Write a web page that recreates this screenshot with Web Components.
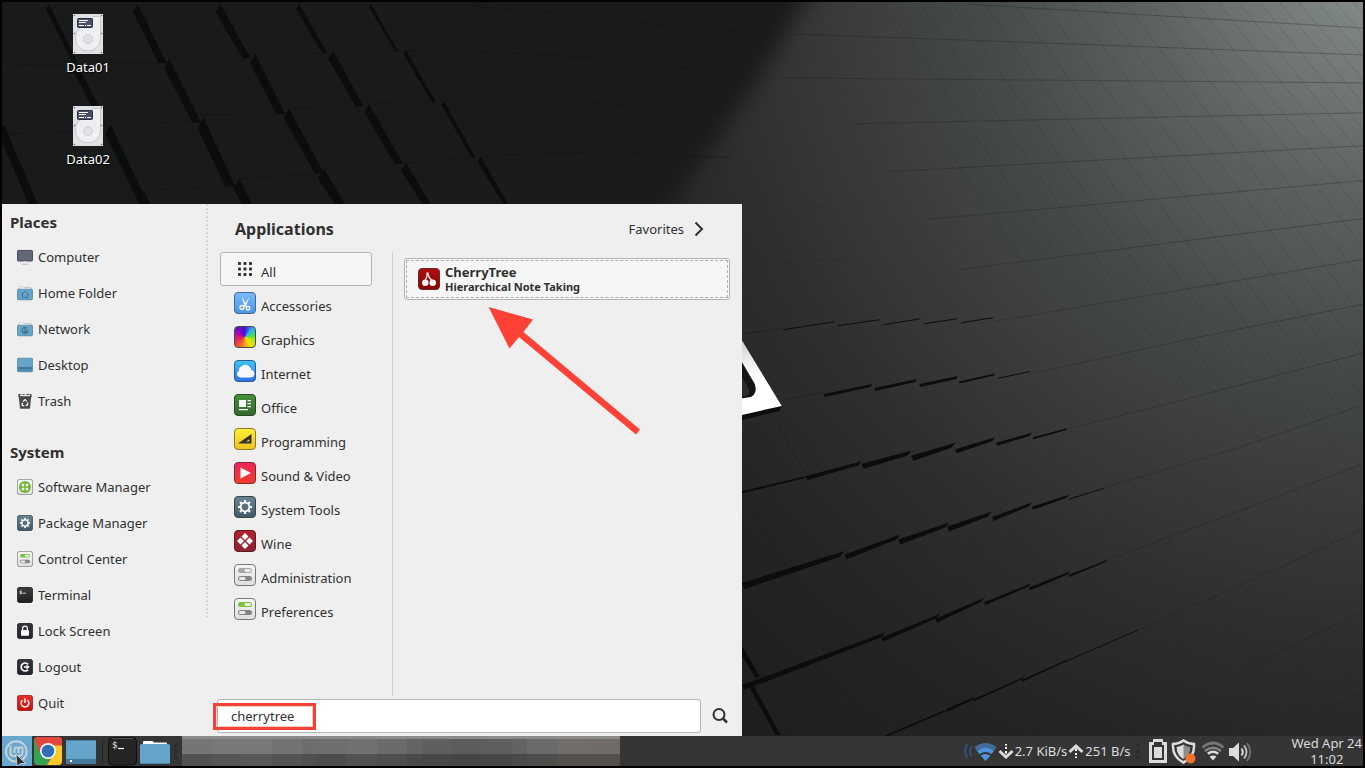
<!DOCTYPE html>
<html lang="en">
<head>
<meta charset="utf-8">
<title>Desktop</title>
<style>
  html, body { margin: 0; background: #000; }
  body { font: 13px/16px "Noto Sans", "Open Sans", sans-serif; color: #303030; }
</style>
</head>
<body>
<mint-desktop>
  <desktop-drive slot="icons">Data01</desktop-drive>
  <desktop-drive slot="icons">Data02</desktop-drive>

  <mint-menu slot="menu">
    <menu-section slot="side" heading="Places">
      <menu-entry icon="computer">Computer</menu-entry>
      <menu-entry icon="home">Home Folder</menu-entry>
      <menu-entry icon="network">Network</menu-entry>
      <menu-entry icon="desktop">Desktop</menu-entry>
      <menu-entry icon="trash">Trash</menu-entry>
    </menu-section>
    <menu-section slot="side" heading="System">
      <menu-entry icon="software">Software Manager</menu-entry>
      <menu-entry icon="package">Package Manager</menu-entry>
      <menu-entry icon="prefs">Control Center</menu-entry>
      <menu-entry icon="terminal">Terminal</menu-entry>
      <menu-entry icon="lock">Lock Screen</menu-entry>
      <menu-entry icon="logout">Logout</menu-entry>
      <menu-entry icon="quit">Quit</menu-entry>
    </menu-section>

    <app-category slot="categories" icon="all" selected>All</app-category>
    <app-category slot="categories" icon="accessories">Accessories</app-category>
    <app-category slot="categories" icon="graphics">Graphics</app-category>
    <app-category slot="categories" icon="internet">Internet</app-category>
    <app-category slot="categories" icon="office">Office</app-category>
    <app-category slot="categories" icon="programming">Programming</app-category>
    <app-category slot="categories" icon="video">Sound &amp; Video</app-category>
    <app-category slot="categories" icon="package">System Tools</app-category>
    <app-category slot="categories" icon="wine">Wine</app-category>
    <app-category slot="categories" icon="admin">Administration</app-category>
    <app-category slot="categories" icon="prefs">Preferences</app-category>

    <app-result slot="results" icon="cherry">CherryTree<span slot="about">Hierarchical Note Taking</span></app-result>
    <menu-search slot="search" query="cherrytree"></menu-search>
  </mint-menu>

  <mint-panel slot="panel"></mint-panel>
</mint-desktop>

<script>
/* setup runs on the detached copy, so nested elements see their attributes when they connect */
const define = (name, html, setup) => {
  const template = document.createElement('template');
  template.innerHTML = html;
  customElements.define(name, class extends HTMLElement {
    connectedCallback() {
      if (this.shadowRoot) return;
      const content = template.content.cloneNode(true);
      if (setup) setup(this, content);
      this.attachShadow({ mode: 'open' }).append(content);
    }
  });
};

/* ---------- icons ---------- */
const tile = (c1, c2, edge) => {
  const id = 'g' + c1.slice(1) + c2.slice(1);
  return `<defs><linearGradient id="${id}" x2="0" y2="1"><stop stop-color="${c1}"/><stop offset="1" stop-color="${c2}"/></linearGradient></defs>
  <rect x=".5" y=".5" width="21" height="21" rx="3.5" fill="url(#${id})" stroke="${edge}"/>`;
};
const gear = (() => {
  let teeth = '';
  for (let a = 0; a < 360; a += 45) teeth += `<rect x="9.9" y="4" width="2.2" height="3" fill="#fff" transform="rotate(${a} 11 11)"/>`;
  return teeth + '<circle cx="11" cy="11" r="4.3" fill="none" stroke="#fff" stroke-width="1.8"/>';
})();
const switches = (on, c) => tile('#f6f6f6', '#dedede', '#777') +
  `<rect x="4" y="4" width="14" height="5" rx="2.5" fill="${on}"/><rect x="10.5" y="5" width="6.5" height="3" rx="1.5" fill="${c}"/>
   <rect x="4" y="12" width="14" height="5" rx="2.5" fill="#858585"/><rect x="5" y="13" width="6.5" height="3" rx="1.5" fill="#e8e8e8"/>`;
const folder = inner => `<path d="M2.5 7V3.5Q2.500 2.500 3.500 2.500H8L9.500 3.500H19Q19.500 3.500 19.500 4.500V8" fill="#fff" stroke="#b5b5b5"/>
  <rect x=".7" y="5.700" width="20.600" height="14.600" rx="1.500" fill="#65a5ca" stroke="#437b9b"/>${inner}`;

const ICONS = {
  computer: ['22', `<rect x=".7" y="2" width="20.600" height="14.500" rx="1" fill="#626878" stroke="#45495a" stroke-width="1.300"/><path d="M9 17h4v3h-4z" fill="#e9e9f2"/><path d="M6 21h10" stroke="#bfc0d2" stroke-width="1.400"/>`],
  home: ['22', folder(`<path d="M6 13l5-4.500 5 4.500M7.500 12v5h7v-5" fill="none" stroke="#3f7390" stroke-width="1.300"/>`)],
  network: ['22', folder(`<circle cx="11" cy="13" r="4.800" fill="#3f7390"/><path d="M7.500 11q3-2 3 1t-2 3zM12.500 9q3 1 2.500 4l-2 1q-1.500-3-.500-5z" fill="#65a5ca"/>`)],
  desktop: ['22', `<rect x=".7" y="1.700" width="20.600" height="18.600" rx="1" fill="#65a5ca" stroke="#4686a9"/><path d="M1 15.200h20" stroke="#263f4e" stroke-width="1.300"/><path d="M1 16h20v3.800H1z" fill="#4e8bac"/>`],
  trash: ['22', `<path d="M2.500 5h17l-1.500 15.500q-.200 1-1 1h-12q-.800 0-1-1z" fill="#4b4b4b"/><path d="M2 1.500h18v4.500h-18z" fill="#3e3e3e"/><path d="M4 3l3-1.500 2 1.500 3-2 2 2 4-1v2.500H4z" fill="#f2f2f2"/><g fill="none" stroke="#fff" stroke-width="1.600"><path d="M8.500 12l2-2.500h1.200l1.500 2M14 13l1 2-1 2h-2M10 17.300H7.500L6.800 15.500 8 13.500"/></g>`],
  software: ['22', tile('#fafafa', '#e2e2e2', '#777') + `<circle cx="11" cy="11" r="8.300" fill="#76b83a"/><g fill="#f4f9ef"><rect x="6.500" y="6.500" width="3.500" height="3.500" rx="1"/><rect x="12" y="6.500" width="3.500" height="3.500" rx="1"/><rect x="6.500" y="12" width="3.500" height="3.500" rx="1"/><rect x="12" y="12" width="3.500" height="3.500" rx="1"/></g>`],
  package: ['22', tile('#6a8591', '#41596a', '#35434b') + gear],
  prefs: ['22', switches('#77c33f', '#eef6e6')],
  admin: ['22', switches('#a5a5a5', '#ececec')],
  terminal: ['22', tile('#3d3d3d', '#1f1f1f', '#111') + `<text x="3" y="9" font-family="DejaVu Sans Mono, monospace" font-size="7" font-weight="bold" fill="#eee">$</text><path d="M8 8.500h4" stroke="#eee" stroke-width="1.200"/>`],
  lock: ['22', tile('#3b3542', '#241f2b', '#17141c') + `<rect x="5.500" y="9.500" width="11" height="8" rx="1" fill="#fff"/><path d="M7.700 10V7.500a3.300 3.300 0 0 1 6.600 0V10" fill="none" stroke="#fff" stroke-width="1.700"/>`],
  logout: ['22', tile('#3b3542', '#241f2b', '#17141c') + `<path d="M15.300 7.300a5.500 5.500 0 1 0 0 7.400" fill="none" stroke="#fff" stroke-width="2.300"/><path d="M9.500 11h4" stroke="#fff" stroke-width="2"/><path d="M13 7.500l4.500 3.500-4.500 3.500z" fill="#fff"/>`],
  quit: ['22', tile('#ee2f27', '#c11412', '#8d1512') + `<path d="M7.500 7.200a5.300 5.300 0 1 0 7 0" fill="none" stroke="#fff" stroke-width="2"/><path d="M11 4.500v6.500" stroke="#fff" stroke-width="2"/>`],
  all: ['22', [4, 9.5, 15].map(y => [4, 9.5, 15].map(x => `<rect x="${x}" y="${y}" width="3" height="3" rx=".8" fill="#303030"/>`).join('')).join('')],
  accessories: ['22', tile('#7cb9fb', '#4a96ea', '#44698f') + `<g fill="none" stroke="#fff" stroke-width="1.300"><circle cx="8" cy="15.500" r="2"/><circle cx="14" cy="16.300" r="1.800"/></g><path d="M8 4.500l2.300 4.500 3 5.800-1.300.700L9 10zM15.500 4.500l-3 8-2.700 2.700-1-1L11.500 11z" fill="#fff"/>`],
  graphics: ['22', `<foreignObject width="22" height="22"><div xmlns="http://www.w3.org/1999/xhtml" style="box-sizing:border-box;width:22px;height:22px;border-radius:4px;border:1px solid #3f4a52;background:conic-gradient(#3a14d8 0deg,#30b8e8 45deg,#4be04a 80deg,#c8e400 115deg,#f0e010 150deg,#f78a1c 190deg,#f04a40 225deg,#e01c6c 260deg,#a008b8 300deg,#3a14d8 360deg)"></div></foreignObject>`],
  internet: ['22', tile('#3ec8f2', '#2f6ee6', '#2d5b8b') + `<path d="M6 17a3.200 3.200 0 0 1-.300-6.200A3.500 3.500 0 0 1 8 6.500a4.800 4.800 0 0 1 7 .500 3.500 3.500 0 0 1 2 3.500A3.200 3.200 0 0 1 16.500 17z" fill="#f8f8f8" stroke="#f8f8f8"/>`],
  office: ['22', tile('#47903c', '#33672b', '#274a22') + `<path d="M5 6h7v7H5zM13.500 6H17v1.200h-3.500zM13.500 9H17v1.200h-3.500zM13.500 12H17v1.200h-3.500zM5 15h9v1.300H5z" fill="#fff"/>`],
  programming: ['22', tile('#fdf03c', '#eec31c', '#8f7a22') + `<path d="M4 15.500L17.500 6v9.500z" fill="#303030"/><path d="M12 13.600l3.300-2.300v2.300z" fill="#f3d328"/>`],
  video: ['22', tile('#f2225c', '#ee3e2a', '#7e2a2e') + `<path d="M6.500 5.500l10.500 5.500-10.500 5.500z" fill="#fff"/>`],
  wine: ['22', tile('#b3202c', '#8d2430', '#5d1a20') + `<g fill="#fff"><path d="M11 3l3.500 3.500L11 10 7.500 6.500zM6.500 7.500L10 11l-3.500 3.500L3 11zM15.500 7.500L19 11l-3.500 3.500L12 11zM11 12l3.500 3.500L11 19l-3.500-3.500z"/></g>`],
  cherry: ['22', tile('#b30d0d', '#850404', '#6b2a2a') + `<g fill="#fff"><circle cx="7.300" cy="14.800" r="3.200"/><circle cx="14.700" cy="14.800" r="3.200"/></g><path d="M7 12.500Q9 10 9.500 5M9.500 5q1 4.500 4.500 7.500" fill="none" stroke="#fff" stroke-width="1.200"/><path d="M8.500 4.500h2v2h-2z" fill="#fff"/>`],
  drive: ['30 40', `<rect width="30" height="40" fill="#dfe1e4"/><path d="M2.500 24.500a12.500 12.500 0 0 0 25 0V2.500h-8V12A12.500 12.500 0 0 0 2.500 24.500z" fill="#eeeff3" stroke="#c6c8cd"/><circle cx="15" cy="25" r="4.500" fill="#dfe1e4" stroke="#cfd1d5"/><rect x="4.500" y="4.500" width="15" height="9" rx="1" fill="#4a506a" stroke="#2c3044"/><path d="M6 6.500h9M6 8.500h7M6 11.500h5M12 11.500h1M14 11.500h4" stroke="#fff"/><g fill="#6d6f76"><circle cx="1.500" cy="1.500" r=".8"/><circle cx="28.500" cy="1.500" r=".8"/><circle cx="1.500" cy="19.500" r=".8"/><circle cx="28.500" cy="19.500" r=".8"/><circle cx="1.500" cy="38.500" r=".8"/><circle cx="28.500" cy="38.500" r=".8"/></g>`],
  chevron: ['10 16', `<path d="M1.500 1.500L8 8l-6.500 6.500" fill="none" stroke="#303030" stroke-width="2"/>`],
  search: ['16', `<circle cx="7" cy="6.500" r="5.500" fill="none" stroke="#303030" stroke-width="2"/><path d="M11 10.500l4 4" stroke="#303030" stroke-width="2.500"/>`],
  mint: ['30', `<rect width="30" height="30" fill="#69a8cf"/><g fill="none" stroke="#c6d1d7" stroke-width="2"><circle cx="14.300" cy="15.500" r="10.300"/><path d="M8.500 9.500v7.500a3 3 0 0 0 3 3h5a4 4 0 0 0 4-3v-3.500a2 2 0 0 0-4-.500v4M16.500 13.500a2 2 0 0 0-4 0V17"/></g><path d="M14 18l9.500 9.500H19L15 30z" fill="#333" stroke="#ddd" stroke-width=".8"/>`],
  chrome: ['28', `<defs><clipPath id="cr"><rect width="28" height="28" rx="4"/></clipPath></defs><g clip-path="url(#cr)"><rect width="28" height="28" fill="#e1473c"/><path d="M0 0L9 18l7 4-3 6H0z" fill="#31a352"/><path d="M14 8h14v20H13l8-12z" fill="#fbc926"/><path d="M0 0h28v8.500H13L5 15z" fill="#e1473c"/></g><circle cx="14" cy="14" r="8" fill="#f7f7f7"/><circle cx="14" cy="14" r="6.300" fill="#2d6fb4"/>`],
  showdesk: ['30', `<rect y="4" width="30" height="24" fill="#65a5ca"/><path d="M0 23h30v5H0z" fill="#44799a"/><path d="M4 24h2v2H4z" fill="#fff"/><path d="M.5 4.500h29" stroke="#4686a9"/>`],
  bigterm: ['30', `<rect x=".5" y="1.500" width="28" height="27.500" rx="4" fill="#252525" stroke="#101010"/><path d="M4 2.500h21" stroke="#555"/><text x="4" y="12" font-family="DejaVu Sans Mono, monospace" font-size="9" fill="#f2f2f2">$</text><path d="M10 12.500h6" stroke="#f2f2f2" stroke-width="1.200"/>`],
  bigfolder: ['30', `<path d="M3 9V6q0-1 1-1h8q1.500 0 2 1.500H26q1 0 1 1V12H3z" fill="#fff"/><rect y="8" width="30" height="20" rx="1.500" fill="#65a5ca"/><path d="M1 27.500h28" stroke="#4686a9"/>`],
  netwifi: ['34 24', `<g fill="none" stroke="#2e5685" stroke-width="1.700"><path d="M4.500 5.500q-5 7 0 13M8.500 7.500q-3 5 0 9.500"/></g><path d="M11.500 8q11-8 22 0l-2.500 4q-8.500-6-17 0z" fill="#456c96"/><path d="M14 12q8.500-6.500 17 0l-2.500 3q-6-4-12 0zM17.500 16.500q5-3 10 0L22.500 22z" fill="#5294de"/>`],
  down: ['16', `<path d="M1.500 8L8 14l6.500-6" fill="none" stroke="#dcdcdc" stroke-width="3"/><path d="M8 10.500V8M8 6V4M8 2.500v-1.500" stroke="#fff" stroke-width="2"/>`],
  up: ['16', `<path d="M1.500 9L8 3l6.500 6" fill="none" stroke="#dcdcdc" stroke-width="3"/><path d="M8 5.500V8M8 10v2M8 13.500V15" stroke="#fff" stroke-width="2"/>`],
  battery: ['18 24', `<path d="M4 0h10v3h4v21H0V3h4z" fill="#dcdcdc"/><path d="M3 6h2V3h8v3h2v15H3z" fill="#353535"/><path d="M5 8h8v11H5z" fill="#dcdcdc"/>`],
  shield: ['26 26', `<path d="M12.500 2.500q5 3.500 10.500 3.500 1 13-10.500 18.500Q1 19 2 6q5.500 0 10.500-3.500z" fill="none" stroke="#dcdcdc" stroke-width="2.500"/><path d="M12.500 6.500q3 2 6.800 2.500.200 8-6.800 12Q5.500 17 5.700 9q3.800-.500 6.800-2.500z" fill="#8c8c8c"/><path d="M12.500 6.500V21Q5.500 17 5.700 9q3.800-.500 6.800-2.500z" fill="#dcdcdc"/><circle cx="19.500" cy="20.500" r="5" fill="#f37329"/>`],
  wifi: ['24 20', `<path d="M1.500 6.500q10.500-9 21 0" fill="none" stroke="#757575" stroke-width="2.800"/><path d="M4 10q8-6.500 16 0" fill="none" stroke="#858585" stroke-width="2.500"/><path d="M6.800 12.800q5.200-4 10.400 0" fill="none" stroke="#dcdcdc" stroke-width="2.500"/><path d="M8.500 15.500q3.500-2 7 0L12 19.500z" fill="#dcdcdc"/>`],
  volume: ['24 22', `<path d="M0 8h4l6-5.500v19L4 16H0z" fill="#dcdcdc"/><g fill="none" stroke-width="2"><path d="M12.500 8.500q2.500 3.500 0 7" stroke="#dcdcdc"/><path d="M15 5.500q5 6.500 0 13" stroke="#bbb"/><path d="M18 3q6.500 9 0 18" stroke="#6e6e6e"/></g>`],
};

define('mint-icon', `
  <style>
    :host { display: block; flex: none; }
    svg { display: block; width: 100%; height: 100%; }
  </style>
  <svg aria-hidden="true"></svg>`, (el, root) => {
  const [size, body] = ICONS[el.getAttribute('name')];
  const [w, h = w] = size.split(' ');
  const svg = root.querySelector('svg');
  svg.setAttribute('viewBox', `0 0 ${w} ${h}`);
  svg.innerHTML = body;
  const scale = el.hasAttribute('size') ? el.getAttribute('size') / w : 1;
  el.style.width = w * scale + 'px';
  el.style.height = h * scale + 'px';
});
const passIcon = (el, root) => root.querySelector('mint-icon').setAttribute('name', el.getAttribute('icon'));

/* ---------- wallpaper: tiled plane, lit from the upper right ---------- */
define('tile-wallpaper', `
  <style>
    :host { display: block; overflow: hidden; background: #191b1a; }
    svg { display: block; width: 100%; height: 100%; }
  </style>
  <svg viewBox="0 0 1365 768" preserveAspectRatio="xMidYMid slice" aria-hidden="true">
    <defs>
      <radialGradient id="light" gradientUnits="userSpaceOnUse" cx="1400" cy="-60" r="1100">
        <stop offset=".05" stop-color="#858d8a"/><stop offset=".14" stop-color="#707775"/>
        <stop offset=".24" stop-color="#5b6160"/><stop offset=".38" stop-color="#464a4b"/>
        <stop offset=".5" stop-color="#3b3d3c"/><stop offset=".65" stop-color="#2c2e2d"/>
        <stop offset=".8" stop-color="#222423"/><stop offset=".95" stop-color="#1d1f1e"/>
      </radialGradient>
      <linearGradient id="metal" x1="0" y1="0" x2="0" y2="1"><stop stop-color="#d0d3d2"/><stop offset=".5" stop-color="#fff"/></linearGradient>
      <filter id="soft" x="-20%" y="-20%" width="140%" height="140%" color-interpolation-filters="sRGB"><feGaussianBlur stdDeviation="11"/></filter>
      <filter id="edge" color-interpolation-filters="sRGB"><feGaussianBlur stdDeviation=".6"/></filter>
    </defs>
    <rect width="1365" height="768" fill="url(#light)"/>
    <path d="M-50-50H832L806 0 758 80 664 215V300H-50z" fill="#191b1a" filter="url(#soft)"/>
    <g id="seams" fill="none"></g>
    <g id="gaps" fill="#0b0d0c" filter="url(#edge)"></g>
    <path d="M742 415l40-9-2 5-38 9z" fill="#0c0e0d"/>
    <path d="M742 340l40 66-40 9z" fill="url(#metal)"/>
    <path d="M738 355l17 29q3 10-4 13l-13 2z" fill="#121413"/>
    <path d="M738 370l11 19q2 5-3 7l-8 2z" fill="#2a2c2b"/>
  </svg>`, (el, root) => {
  const seams = [], line = (o, ...p) => seams.push(`<polyline points="${p.join(' ')}" stroke="#171a19" stroke-opacity="${o}"/>`);
  [[968,3,1365,27],[740,31,1100,44,1365,54],[783,77,1365,82],[855,123,1365,112],[890,171,1365,145],
   [926,219,1365,180],[961,269,1365,218],[997,321,1365,259],[1030,374,1200,337,1365,304],[1068,429,1184,400,1365,353],
   [1105,488,1240,448,1365,405],[1107,561,1250,508,1365,464],[1107,645,1250,582,1365,530],
   [1110,736,1250,668,1365,612],[1282,736,1365,692]].forEach(p => line(.3, ...p));
  [777,811,849,885,920,952,984,1015,1044,1072,1100,1126,1151,1175,1198,1220,1241,1262,1282,1301,1320,1338,1355].forEach((x, i) => {
    const slope = .66 + i * .009;
    const end = i === 0 ? 123 : 760;
    line(.14, x, 2, x + slope * (end - 2), end);
  });
  [[772,415,807,475],[743,493,787,567],[783,580,825,653],[822,667,860,736],[742,334,783,328],[782,401,825,392]].forEach(p => line(.5, ...p));
  [[840,395,1040,736],[880,385,1090,736],[920,378,1140,736],[960,372,1190,736],[1000,372,1240,736],
   [783,160,910,372],[800,220,880,350],[760,150,820,145],[775,207,860,203],[760,262,850,259]].forEach(p => line(.12, ...p));
  [[437,3,462,48],[473,50,500,97],[511,100,539,150],[550,153,577,202],[500,10,525,50],[538,53,560,100],[575,103,600,150],
   [688,3,702,27],[731,3,760,48]].forEach(p => line(.4, ...p));
  [[0,63,75,65],[95,62,165,62],[168,57,248,57],[254,52,325,52],[332,50,470,50,600,57,700,69],[0,133,97,131],
   [109,123,197,121],[202,114,284,113],[288,107,361,106],[368,103,434,101],[443,100,570,100,720,112],[142,190,234,185],
   [238,178,321,173],[323,168,400,163],[405,162,473,157],[480,155,610,151,730,157],[470,5,560,12,640,22,740,31]]
    .forEach(p => seams.push(`<polyline points="${p.join(' ')}" stroke="#101211" stroke-opacity=".4"/>`));
  root.getElementById('seams').innerHTML = seams.join('');

  const gaps = [];
  /* upright gaps between the raised tiles: x1 y1 x2 y2 width */
  [[47,3,76,62,5],[76,64,102,115,7],[109,124,147,204,9],[136,3,165,62,8],[168,58,200,122,9],[202,117,234,186,10],
   [219,3,249,57,8],[254,53,284,113,9],[288,108,323,173,9],[238,178,251,204,10],[323,168,344,204,10],[142,190,149,204,8],
   [298,3,326,52,5],[332,50,363,106,8],[368,103,402,163,8],[405,162,430,204,8],[2,124,36,204,9],
   [370,3,397,50,3],[405,49,435,101,4],[443,100,475,157,4],[480,156,508,204,5]]
    .forEach(([a,b,c,d,w]) => gaps.push(`<path d="M${a} ${b}L${c} ${d}H${c-w}L${a-w*.6} ${b+w}z"/>`));
  /* lengthwise gaps, thinning out to the right */
  [[783,329,835,321,0],[838,325,880,319,0],[884,324,921,318,0],[925,323,958,318,0],[962,322,994,317,0],
   [824,395,873,385,2],[875,389,918,380,2],[920,385,959,377,2],[960,382,996,374,1],[998,378,1031,371,0],
   [742,492,806,477,1],[806,478,862,463,3],[862,466,912,453,4],[912,458,956,445,4],[956,451,996,439,3],[997,444,1033,434,2],[1034,438,1068,429,1],
   [742,586,845,554,5],[845,557,901,537,4],[899,542,950,525,4],[948,529,993,514,4],[993,519,1033,504,3],[1033,508,1070,496,2],[1070,499,1105,488,0],
   [742,688,886,635,4],[882,640,941,616,3],[936,621,985,600,3],[985,604,1032,585,2],[1030,589,1071,573,2],[1070,576,1108,561,1],
   [885,737,947,711,1],[947,711,975,699,2],[974,701,1025,678,1],[1023,681,1068,661,1],[1066,662,1140,630,0]]
    .forEach(([a,b,c,d,w]) => gaps.push(`<path d="M${a} ${b-w/2}L${c} ${d-w/2}L${c-w} ${d+w/2+1}L${a+w/2} ${b+w/2+1}z"/>`));
  gaps.push('<path d="M740 643l20 34-4 2-16-26zM750 689l4-2 27 49h-5z"/>');
  root.getElementById('gaps').innerHTML = gaps.join('');
});

/* ---------- desktop ---------- */
define('mint-desktop', `
  <style>
    :host { display: flex; flex-direction: column; box-sizing: border-box; min-height: 100vh; border: 2px solid #000; position: relative; }
    tile-wallpaper { position: absolute; inset: 0; }
    main { flex: 1; display: flex; flex-direction: column; justify-content: space-between; align-items: flex-start; position: relative; }
    .icons { display: flex; flex-direction: column; gap: 28px; padding: 12px 0 28px 46px; }
    footer { position: relative; }
  </style>
  <tile-wallpaper></tile-wallpaper>
  <main><div class="icons"><slot name="icons"></slot></div><slot name="menu"></slot></main>
  <footer><slot name="panel"></slot></footer>`);

define('desktop-drive', `
  <style>
    :host { display: block; width: 80px; color: #fff; text-shadow: 1px 1px 1px #000; }
    a { display: flex; flex-direction: column; align-items: center; gap: 5px; height: 64px; color: inherit; text-decoration: none; line-height: 16px; }
  </style>
  <a href="#"><mint-icon name="drive"></mint-icon><span><slot></slot></span></a>`);

/* ---------- menu ---------- */
define('mint-menu', `
  <style>
    :host { display: grid; grid-template-columns: 206px 534px; background: #efefef; position: relative; }
    nav { display: flex; flex-direction: column; gap: 21px; padding: 6px 0 15px;
      background: repeating-linear-gradient(#d4d4d4 0 2px, transparent 2px 4px) right top / 2px 413px no-repeat; }
    section { display: grid; grid-template: 48px 1fr 40px / 183px 1fr; padding-left: 2px; }
    h2 { margin: 0; padding: 2px 0 0 25px; align-self: center; font-size: 16px; line-height: 20px; }
    .fav { display: flex; align-items: center; justify-self: end; gap: 10px; padding: 2px 38px 0 0; border: 0; background: none; font: inherit; color: inherit; }
    .cats { padding: 0 20px 0 10px; border-right: 1px solid #d0d0d0; }
    .results { padding: 6px 12px 0 11px; }
    .search { grid-column: 1 / 3; padding: 3px 14px 3px 7px; }
    .arrow { position: absolute; left: 486px; top: 103px; width: 153px; height: 128px; }
  </style>
  <nav><slot name="side"></slot></nav>
  <section>
    <h2>Applications</h2>
    <button class="fav">Favorites <mint-icon name="chevron"></mint-icon></button>
    <div class="cats"><slot name="categories"></slot></div>
    <div class="results"><slot name="results"></slot></div>
    <div class="search"><slot name="search"></slot></div>
  </section>
  <svg class="arrow" viewBox="0 0 153 128" aria-hidden="true"><path d="M.5 0L45 12.500 35.500 25 152 122.500 148 127.500 31 30 21.500 41.500z" fill="#ff4136"/></svg>`);

define('menu-section', `
  <style>
    :host { display: block; }
    h2 { margin: 0 0 5px; padding-left: 8px; font-size: 15px; line-height: 24px; }
  </style>
  <h2></h2><slot></slot>`, (el, root) => { root.querySelector('h2').textContent = el.getAttribute('heading'); });

define('menu-entry', `
  <style>
    :host { display: block; }
    button { display: flex; align-items: center; gap: 5px; width: 100%; height: 36px; padding: 0 0 0 15px; border: 0; background: none; font: inherit; color: inherit; text-align: left; }
  </style>
  <button><mint-icon size="16"></mint-icon><span><slot></slot></span></button>`, passIcon);

define('app-category', `
  <style>
    :host { display: block; }
    button { box-sizing: border-box; display: flex; align-items: flex-start; gap: 5px; width: 100%; height: 34px; padding: 5px 0 0 13px; border: 1px solid transparent; border-radius: 3px; background: none; font: inherit; color: inherit; text-align: left; }
    span { padding-top: 6px; }
    :host([selected]) button { border-color: #b4b4b4; background: #f6f6f6; }
  </style>
  <button><mint-icon></mint-icon><span><slot></slot></span></button>`, passIcon);

define('app-result', `
  <style>
    :host { display: block; }
    button { box-sizing: border-box; display: flex; align-items: center; gap: 5px; width: 100%; height: 42px; padding: 0 13px; border: 1px solid #b4b4b4; border-radius: 3px; outline: 1px dashed #b0b0b0; outline-offset: -3px; background: #f6f6f6; font: inherit; font-weight: bold; color: inherit; text-align: left; }
    .text { display: flex; flex-direction: column; line-height: 15px; }
    .about { font-size: 11px; line-height: 14px; }
  </style>
  <button><mint-icon></mint-icon><span class="text"><span><slot></slot></span><span class="about"><slot name="about"></slot></span></span></button>`, passIcon);

define('menu-search', `
  <style>
    :host { display: flex; align-items: center; gap: 11px; position: relative; }
    input { box-sizing: border-box; flex: 1; min-width: 0; height: 34px; padding: 0 13px; border: 1px solid #b4b4b4; border-radius: 3px; background: #fff; font: inherit; color: inherit; outline: 0; }
    button { display: flex; padding: 0; border: 0; background: none; }
    .mark { position: absolute; box-sizing: border-box; left: -4px; top: 4px; width: 103px; height: 27px; border: 3px solid #f44336; box-shadow: inset 0 0 0 1px #ffc9c4; pointer-events: none; }
  </style>
  <input type="text" aria-label="Search"><button aria-label="Search"><mint-icon name="search"></mint-icon></button><div class="mark"></div>`,
  (el, root) => { root.querySelector('input').setAttribute('value', el.getAttribute('query')); });

/* ---------- panel ---------- */
define('mint-panel', `
  <style>
    :host { display: flex; align-items: center; gap: 2px; height: 30px; background: #353535; color: #dcdcdc; }
    button { display: flex; align-items: center; width: 30px; height: 30px; padding: 0; border: 0; background: none; }
    .sep { width: 8px; height: 24px; background: linear-gradient(#222, #222) center / 1px 100% no-repeat; }
    .dots { width: 8px; height: 16px; background: repeating-linear-gradient(#2d2d2d 0 4px, transparent 4px 6px) center / 4px 100% no-repeat; }
    .tray { display: flex; align-items: center; margin-left: auto; }
    .rate { display: flex; align-items: center; gap: 1px; }
    .status { display: flex; align-items: center; gap: 4px; padding: 0 39px 0 7px; }
    time { align-self: flex-start; padding-right: 1px; text-align: center; }
    .dots.right { margin-left: 3px; }
  </style>
  <button aria-label="Menu"><mint-icon name="mint"></mint-icon></button>
  <button aria-label="Chrome"><mint-icon name="chrome"></mint-icon></button>
  <button aria-label="Show desktop"><mint-icon name="showdesk"></mint-icon></button>
  <div class="sep"></div>
  <button aria-label="Terminal"><mint-icon name="bigterm"></mint-icon></button>
  <button aria-label="Files"><mint-icon name="bigfolder"></mint-icon></button>
  <div class="dots"></div>
  <window-list></window-list>
  <div class="tray">
    <div class="rate"><mint-icon name="netwifi"></mint-icon><mint-icon name="down"></mint-icon><span>2.7 KiB/s</span><mint-icon name="up"></mint-icon><span>251 B/s</span></div>
    <div class="dots right"></div>
    <div class="status"><mint-icon name="battery"></mint-icon><mint-icon name="shield"></mint-icon><mint-icon name="wifi"></mint-icon><mint-icon name="volume"></mint-icon></div>
    <time>Wed Apr 24<br>11:02</time>
  </div>`);

/* open windows, pixelated for privacy */
define('window-list', `
  <style>
    :host { display: block; flex: 0 1 438px; height: 30px; min-width: 0; }
    svg { display: block; width: 100%; height: 100%; }
  </style>
  <svg viewBox="0 0 438 30" preserveAspectRatio="none" shape-rendering="crispEdges" aria-hidden="true"></svg>`, (el, root) => {
  const upper = ['#747576','#777879','#787878','#737373','#6c6d6e','#6e6e6f','#717171','#6b6b6b','#646464','#5f5f5f','#5c5c5c','#5e5e5e','#646363','#6b6a69','#706d6a','#716c69','#6f6b68','#757371'];
  const lower = ['#505152','#555657','#585858','#535353','#4f4f50','#4c4c4d','#515151','#4e4e4e','#494949','#474747','#454545','#464646','#4a4a4a','#4e4d4c','#54504d','#55504c','#514d4a','#545250'];
  let out = '';
  for (let i = 0; i < 31; i++) {
    const k = Math.floor(i * 17 / 30), x = i * 15;
    out += `<rect x="${x}" width="15" height="3" fill="#8b8b8b"/><rect x="${x}" y="3" width="15" height="15" fill="${upper[k]}"/><rect x="${x}" y="18" width="15" height="12" fill="${lower[k]}"/>`;
  }
  root.querySelector('svg').innerHTML = out;
});
</script>
</body>
</html>
